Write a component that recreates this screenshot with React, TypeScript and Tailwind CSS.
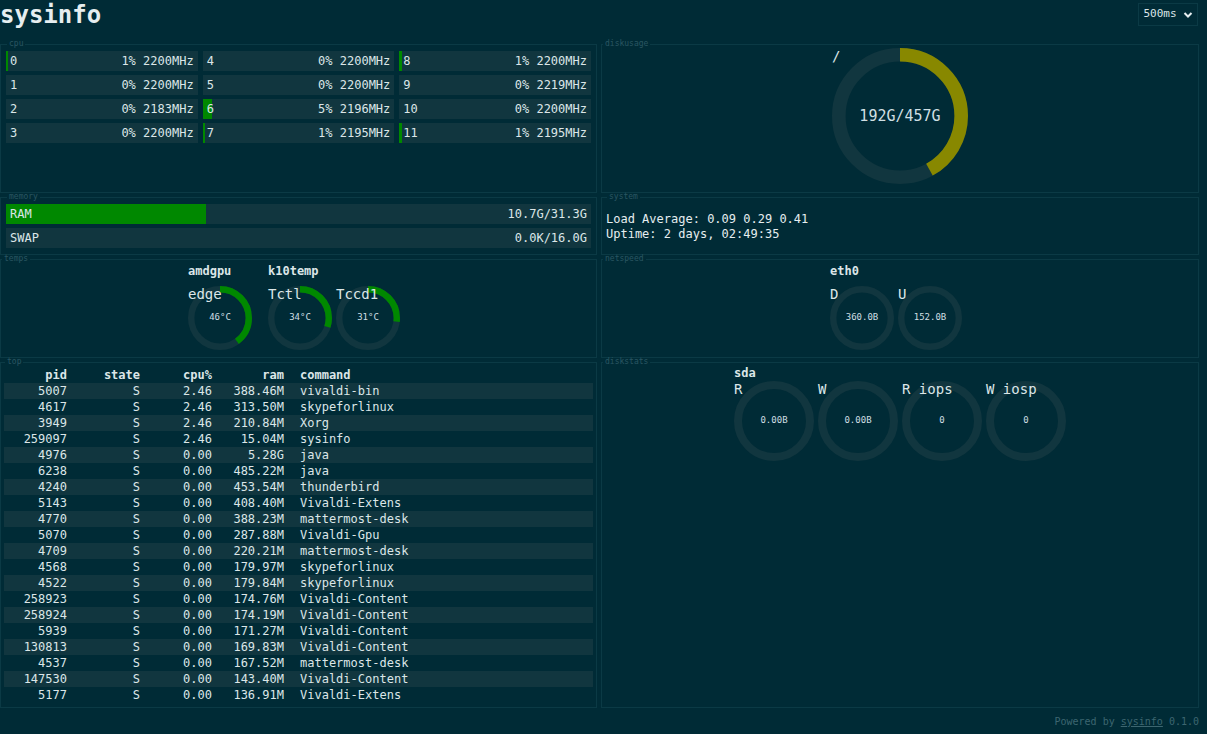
import React from 'react';

const mono = { fontFamily: '"DejaVu Sans Mono", "Liberation Mono", monospace' };

const cpus = [
  { id: 0, pct: 1, mhz: 2200 },
  { id: 1, pct: 0, mhz: 2200 },
  { id: 2, pct: 0, mhz: 2183 },
  { id: 3, pct: 0, mhz: 2200 },
  { id: 4, pct: 0, mhz: 2200 },
  { id: 5, pct: 0, mhz: 2200 },
  { id: 6, pct: 5, mhz: 2196 },
  { id: 7, pct: 1, mhz: 2195 },
  { id: 8, pct: 1, mhz: 2200 },
  { id: 9, pct: 0, mhz: 2219 },
  { id: 10, pct: 0, mhz: 2200 },
  { id: 11, pct: 1, mhz: 2195 },
];

const procs: [string, string, string, string, string][] = [
  ['5007', 'S', '2.46', '388.46M', 'vivaldi-bin'],
  ['4617', 'S', '2.46', '313.50M', 'skypeforlinux'],
  ['3949', 'S', '2.46', '210.84M', 'Xorg'],
  ['259097', 'S', '2.46', '15.04M', 'sysinfo'],
  ['4976', 'S', '0.00', '5.28G', 'java'],
  ['6238', 'S', '0.00', '485.22M', 'java'],
  ['4240', 'S', '0.00', '453.54M', 'thunderbird'],
  ['5143', 'S', '0.00', '408.40M', 'Vivaldi-Extens'],
  ['4770', 'S', '0.00', '388.23M', 'mattermost-desk'],
  ['5070', 'S', '0.00', '287.88M', 'Vivaldi-Gpu'],
  ['4709', 'S', '0.00', '220.21M', 'mattermost-desk'],
  ['4568', 'S', '0.00', '179.97M', 'skypeforlinux'],
  ['4522', 'S', '0.00', '179.84M', 'skypeforlinux'],
  ['258923', 'S', '0.00', '174.76M', 'Vivaldi-Content'],
  ['258924', 'S', '0.00', '174.19M', 'Vivaldi-Content'],
  ['5939', 'S', '0.00', '171.27M', 'Vivaldi-Content'],
  ['130813', 'S', '0.00', '169.83M', 'Vivaldi-Content'],
  ['4537', 'S', '0.00', '167.52M', 'mattermost-desk'],
  ['147530', 'S', '0.00', '143.40M', 'Vivaldi-Content'],
  ['5177', 'S', '0.00', '136.91M', 'Vivaldi-Extens'],
];

function Panel({ title, className = '', children }: { title: string; className?: string; children: React.ReactNode }) {
  return (
    <fieldset className={`min-w-0 border border-[#0b3a45] ${className}`}>
      <legend className="ml-[1px] px-[2px] text-[8px] leading-[8px] text-[#2a5662]">{title}</legend>
      {children}
    </fieldset>
  );
}

// ring gauge, value 0..100, arc starts at 12 o'clock
function Gauge({
  size,
  pct,
  color = '#008800',
  label,
  value,
  valueClass = 'text-[9px]',
}: {
  size: number;
  pct: number;
  color?: string;
  label: string;
  value: string;
  valueClass?: string;
}) {
  return (
    <div className="relative shrink-0" style={{ width: size, height: size }}>
      <svg viewBox="0 0 100 100" className="absolute inset-0 h-full w-full">
        <circle cx="50" cy="50" r="45" fill="none" stroke="#11363f" strokeWidth="10" />
        {pct > 0 && (
          <circle
            cx="50"
            cy="50"
            r="45"
            fill="none"
            stroke={color}
            strokeWidth="10"
            pathLength={100}
            strokeDasharray={`${pct} 100`}
            transform="rotate(-90 50 50)"
          />
        )}
      </svg>
      <span className="absolute left-0 top-0 text-[14px] leading-[16px] text-[#dce6e8]">{label}</span>
      <div className={`absolute inset-0 flex items-center justify-center text-[#cfdfe3] ${valueClass}`}>{value}</div>
    </div>
  );
}

export default function App() {
  return (
    <div className="min-h-screen bg-[#002b36] text-[#dce6e8]" style={mono}>
      {/* Header */}
      <header className="flex h-[40px] items-start justify-between pr-[9px]">
        <h1 className="text-[24px] font-bold leading-[30px] text-[#e6eef0]">sysinfo</h1>
        <div className="mt-[3px] flex h-[23px] w-[60px] items-center justify-center gap-[6px] border border-[#0b3a45] text-[11px] text-[#dce6e8]">
          <span>500ms</span>
          <svg width="10" height="8" viewBox="0 0 10 8">
            <path d="M1.5 2 L5 5.5 L8.5 2" fill="none" stroke="#e6eef0" strokeWidth="2" />
          </svg>
        </div>
      </header>

      <div className="grid w-[1199px] grid-cols-[597px_598px] grid-rows-[153px_62px_103px_350px] gap-x-[4px]">
        {/* cpu */}
        <Panel title="cpu" className="px-[5px] pt-[3px]">
          <div className="grid grid-flow-col grid-cols-3 grid-rows-4 gap-x-[5px] gap-y-[4px] text-[12px]">
            {cpus.map((c) => (
              <div key={c.id} className="relative h-[20px] bg-[#11363f]">
                {c.pct > 0 && (
                  <div className="absolute inset-y-0 left-0 bg-[#008800]" style={{ width: `${Math.max(c.pct, 1.2)}%` }} />
                )}
                <div className="relative flex h-full items-center justify-between px-[4px] leading-[20px]">
                  <span>{c.id}</span>
                  <span>
                    {c.pct}% {c.mhz}MHz
                  </span>
                </div>
              </div>
            ))}
          </div>
        </Panel>

        {/* diskusage */}
        <Panel title="diskusage" className="flex justify-center">
          <div className="flex justify-center">
            <Gauge size={136} pct={42} color="#888800" label="/" value="192G/457G" valueClass="text-[15px] pt-[1px]" />
          </div>
        </Panel>

        {/* memory */}
        <Panel title="memory" className="px-[5px] pt-[3px]">
          <div className="flex flex-col gap-[4px] text-[12px]">
            {[
              { name: 'RAM', pct: 34.2, val: '10.7G/31.3G' },
              { name: 'SWAP', pct: 0, val: '0.0K/16.0G' },
            ].map((m) => (
              <div key={m.name} className="relative h-[20px] bg-[#11363f]">
                {m.pct > 0 && <div className="absolute inset-y-0 left-0 bg-[#008800]" style={{ width: `${m.pct}%` }} />}
                <div className="relative flex h-full items-center justify-between px-[4px]">
                  <span>{m.name}</span>
                  <span>{m.val}</span>
                </div>
              </div>
            ))}
          </div>
        </Panel>

        {/* system */}
        <Panel title="system" className="px-[4px] pt-[11px]">
          <div className="text-[12px] leading-[15px] text-[#e6eef0]">
            <div>Load Average: 0.09 0.29 0.41</div>
            <div>Uptime: 2 days, 02:49:35</div>
          </div>
        </Panel>

        {/* temps */}
        <Panel title="temps" className="pt-[1px]">
          <div className="flex justify-center gap-[16px] pr-[9px]">
            <div className="flex flex-col">
              <div className="mb-[8px] text-[12px] font-bold leading-[14px]">amdgpu</div>
              <div className="flex gap-[4px]">
                <Gauge size={64} pct={40} label="edge" value="46°C" />
              </div>
            </div>
            <div className="flex flex-col">
              <div className="mb-[8px] text-[12px] font-bold leading-[14px]">k10temp</div>
              <div className="flex gap-[4px]">
                <Gauge size={64} pct={30} label="Tctl" value="34°C" />
                <Gauge size={64} pct={27} label="Tccd1" value="31°C" />
              </div>
            </div>
          </div>
        </Panel>

        {/* netspeed */}
        <Panel title="netspeed" className="pt-[1px]">
          <div className="flex justify-center pr-[8px]">
            <div className="flex flex-col">
              <div className="mb-[8px] text-[12px] font-bold leading-[14px]">eth0</div>
              <div className="flex gap-[4px]">
                <Gauge size={64} pct={0} label="D" value="360.0B" />
                <Gauge size={64} pct={0} label="U" value="152.0B" />
              </div>
            </div>
          </div>
        </Panel>

        {/* top */}
        <Panel title="top" className="px-[3px] pt-[1px]">
          <div className="text-[12px] leading-[16px]">
            <div className="grid grid-cols-[63px_73px_72px_72px_1fr] font-bold">
              <div className="text-right">pid</div>
              <div className="text-right">state</div>
              <div className="text-right">cpu%</div>
              <div className="text-right">ram</div>
              <div className="pl-[16px]">command</div>
            </div>
            {procs.map((p, i) => (
              <div
                key={p[0]}
                className={`grid h-[16px] grid-cols-[63px_73px_72px_72px_1fr] ${i % 2 === 0 ? 'bg-[#11363f]' : ''}`}
              >
                <div className="text-right">{p[0]}</div>
                <div className="text-right">{p[1]}</div>
                <div className="text-right">{p[2]}</div>
                <div className="text-right">{p[3]}</div>
                <div className="pl-[16px]">{p[4]}</div>
              </div>
            ))}
          </div>
        </Panel>

        {/* diskstats */}
        <Panel title="diskstats">
          <div className="flex justify-center">
            <div className="flex flex-col">
              <div className="mb-[1px] text-[12px] font-bold leading-[14px]">sda</div>
              <div className="flex gap-[4px]">
                <Gauge size={80} pct={0} label="R" value="0.00B" />
                <Gauge size={80} pct={0} label="W" value="0.00B" />
                <Gauge size={80} pct={0} label="R iops" value="0" />
                <Gauge size={80} pct={0} label="W iosp" value="0" />
              </div>
            </div>
          </div>
        </Panel>
      </div>

      <footer className="w-[1199px] pt-[7px] text-right text-[10px] leading-[14px] text-[#3d6670]">
        Powered by <span className="underline">sysinfo</span> 0.1.0
      </footer>
    </div>
  );
}
